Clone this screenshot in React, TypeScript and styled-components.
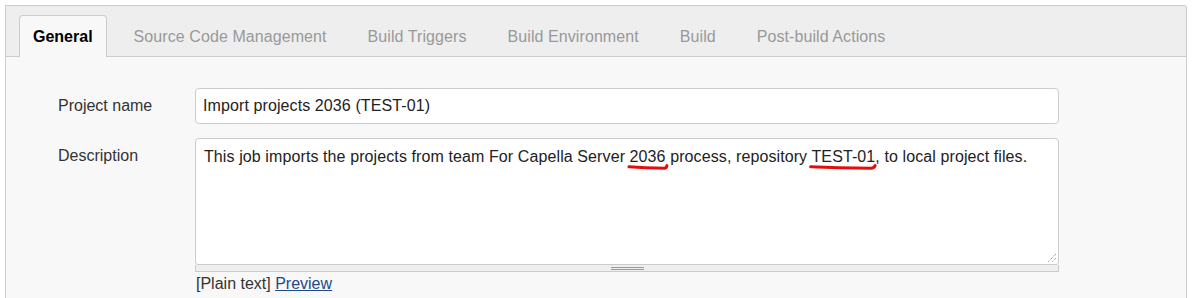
import React from "react";
import styled, { createGlobalStyle } from "styled-components";

const GlobalStyle = createGlobalStyle`
  html, body {
    margin: 0;
    padding: 0;
    background: #ffffff;
    font-family: "Liberation Sans", Arial, sans-serif;
    font-size: 16px;
    overflow: hidden;
  }
`;

const Panel = styled.div`
  margin: 5px 0 0 5px;
  width: 1182px;
  min-height: 320px;
  box-sizing: border-box;
  border: 1px solid #cccccc;
  border-bottom: none;
  border-top-right-radius: 3px;
  background: #f8f8f8;
`;

const TabBar = styled.div`
  display: flex;
  align-items: flex-start;
  gap: 13px;
  height: 41px;
  padding: 9px 0 0 13px;
  background: #eeeeee;
  border-bottom: 1px solid #cccccc;
  border-top-right-radius: 3px;
`;

const Tab = styled.div<{ $active?: boolean }>`
  height: 42px;
  box-sizing: border-box;
  padding: 0 13px;
  line-height: 42px;
  letter-spacing: ${(p) => (p.$active ? "0" : "0.08px")};
  border: 1px solid ${(p) => (p.$active ? "#cccccc" : "transparent")};
  border-bottom: none;
  border-radius: 4px 4px 0 0;
  background: ${(p) => (p.$active ? "#f8f8f8" : "transparent")};
  color: ${(p) => (p.$active ? "#000000" : "#999999")};
  font-weight: ${(p) => (p.$active ? 700 : 400)};
  white-space: nowrap;
`;

const Form = styled.div`
  display: grid;
  grid-template-columns: 137px 864px;
  row-gap: 14px;
  padding: 31px 0 0 52px;
`;

const Label = styled.div`
  line-height: 36px;
  color: #333333;
`;

const TextInput = styled.div`
  height: 36px;
  box-sizing: border-box;
  border: 1px solid #cccccc;
  border-radius: 4px;
  background: #ffffff;
  padding: 0 7px;
  line-height: 34px;
  letter-spacing: 0.1px;
  color: #222222;
`;

const Editor = styled.div`
  display: flex;
  flex-direction: column;
`;

const TextArea = styled.div`
  position: relative;
  height: 127px;
  box-sizing: border-box;
  border: 1px solid #cccccc;
  border-radius: 4px 4px 3px 3px;
  background: #ffffff;
  padding: 9px 8px;
  line-height: 18px;
  letter-spacing: 0.1px;
  color: #222222;
`;

const ResizeHandle = styled.svg`
  position: absolute;
  right: 1px;
  bottom: 1px;
`;

const Mark = styled.span`
  position: relative;
`;

const Underline = styled.svg`
  position: absolute;
  left: -2px;
  top: 100%;
  width: calc(100% + 4px);
  height: 6px;
  overflow: visible;
`;

const Grippie = styled.div`
  height: 6px;
  background: #eeeeee;
  border: 1px solid #cccccc;
  border-top: none;
  display: flex;
  justify-content: center;
  align-items: center;
  &::before {
    content: "";
    width: 33px;
    height: 1px;
    border-top: 1px solid #9a9a9a;
    border-bottom: 1px solid #9a9a9a;
  }
`;

const Hint = styled.div`
  margin-top: 3px;
  padding-left: 1px;
  line-height: 18px;
  color: #333333;
`;

const PreviewLink = styled.a`
  color: #204a87;
  text-decoration: underline;
  cursor: pointer;
`;

const Annotated: React.FC<{ children: React.ReactNode }> = ({ children }) => (
  <Mark>
    {children}
    <Underline viewBox="0 0 40 6" preserveAspectRatio="none">
      <path
        d="M1 1.8 C 10 2.6, 28 3.2, 36.5 3.2 C 37.8 3.1, 38.6 2.2, 39 0.6"
        fill="none"
        stroke="#e30d0d"
        strokeWidth="3"
        strokeLinecap="round"
        vectorEffect="non-scaling-stroke"
      />
    </Underline>
  </Mark>
);

const tabs = [
  "General",
  "Source Code Management",
  "Build Triggers",
  "Build Environment",
  "Build",
  "Post-build Actions",
];

export default function App() {
  return (
    <>
      <GlobalStyle />
      <Panel>
        <TabBar>
          {tabs.map((t, i) => (
            <Tab key={t} $active={i === 0}>
              {t}
            </Tab>
          ))}
        </TabBar>
        <Form>
          <Label>Project name</Label>
          <TextInput>Import projects 2036 (TEST-01)</TextInput>
          <Label>Description</Label>
          <Editor>
            <TextArea>
              This job imports the projects from team For Capella Server{" "}
              <Annotated>2036</Annotated> process, repository{" "}
              <Annotated>TEST-01</Annotated>, to local project files.
              <ResizeHandle width="10" height="10" viewBox="0 0 10 10">
                <path
                  d="M9 1 L1 9 M9 5 L5 9"
                  stroke="#808080"
                  strokeWidth="1"
                  strokeDasharray="1 1"
                  fill="none"
                />
              </ResizeHandle>
            </TextArea>
            <Grippie />
            <Hint>
              [Plain text] <PreviewLink>Preview</PreviewLink>
            </Hint>
          </Editor>
        </Form>
      </Panel>
    </>
  );
}
